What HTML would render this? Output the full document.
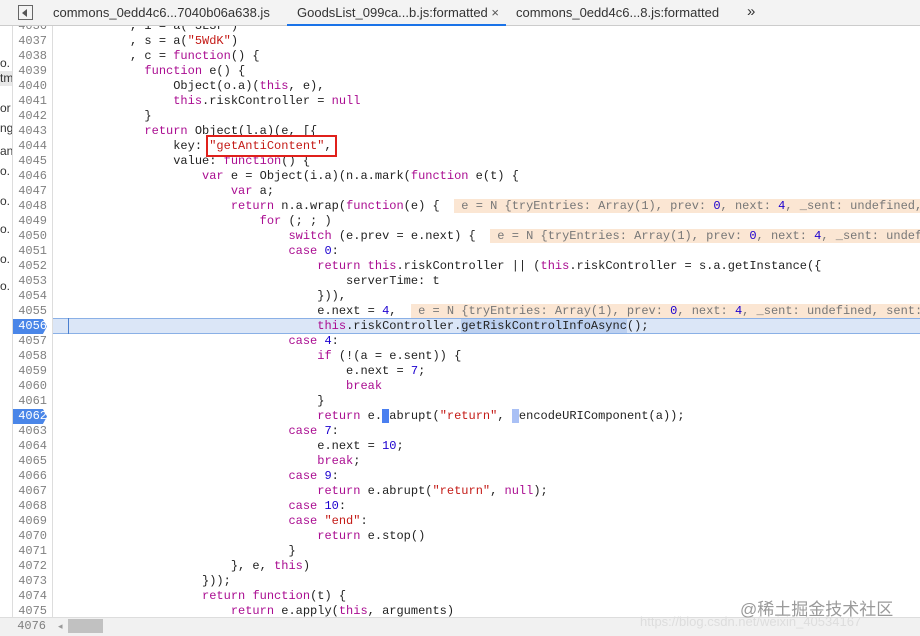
<!DOCTYPE html>
<html><head><meta charset="utf-8"><style>
*{margin:0;padding:0;box-sizing:border-box}
body{width:920px;height:636px;overflow:hidden;background:#fff;position:relative;font-family:"Liberation Mono",monospace}
.tabs{position:absolute;left:0;top:0;width:920px;height:26px;background:#f3f3f3;border-bottom:1px solid #ccc;font-family:"Liberation Sans",sans-serif;font-size:13px;color:#333;z-index:5}
.tabs span{position:absolute;top:5px;white-space:nowrap}
.side{position:absolute;left:0;top:26px;width:12px;height:610px;background:#fff;font-family:"Liberation Sans",sans-serif;font-size:12px;color:#333;overflow:hidden}
.side div{position:absolute;left:0;height:15px;white-space:nowrap}
.gut{position:absolute;left:12px;top:26px;width:41px;height:591px;background:#fff;border-left:1px solid #ddd;border-right:1px solid #ddd;overflow:hidden}
.gut div{position:absolute;left:0;width:34px;text-align:right;font-size:12px;color:#808080;height:15px;line-height:15px}
.gut .w{color:#fff}
.cv{position:absolute;left:53px;top:26px;width:867px;height:591px;overflow:hidden}
.cv pre{position:absolute;left:5px;top:-7.5px;font-family:"Liberation Mono",monospace;font-size:12px;line-height:15px;color:#222;white-space:pre}
.k{color:#aa0d91}.s{color:#c41a16}.n{color:#1c00cf}
.iv{background:#fbe6d3;color:#777}
.bp{position:absolute;left:1px;width:38px;height:14px;background:#4a86e8;clip-path:polygon(0 0,88% 0,100% 50%,88% 100%,0 100%)}
</style></head><body>
<div class="tabs">
<span style="left:18px;top:5px;width:15px;height:15px;border:1px solid #666;"></span>
<span style="left:22px;top:9px;width:0;height:0;border-top:4px solid transparent;border-bottom:4px solid transparent;border-right:5px solid #555"></span>
<span style="left:53px">commons_0edd4c6...7040b06a638.js</span>
<span style="left:297px">GoodsList_099ca...b.js:formatted <span style="position:static;color:#555">×</span></span>
<div style="position:absolute;left:287px;top:24px;width:219px;height:2px;background:#1a73e8"></div>
<span style="left:516px">commons_0edd4c6...8.js:formatted</span>
<span style="left:747px;font-size:15px;top:3px">»</span>
</div>
<div class="side">
<div style="top:30px">o.</div><div style="top:45px;background:#e8e8e8;width:12px">tm</div><div style="top:75px">or</div><div style="top:95px">ng</div><div style="top:118px">an</div><div style="top:138px">o.</div><div style="top:168px">o.</div><div style="top:196px">o.</div><div style="top:226px">o.</div><div style="top:253px">o.</div>
</div>
<div class="cv">
<div style="position:absolute;left:0;top:292px;width:867px;height:16px;background:#dbe6f7;border-top:1px solid #8ab0e6;border-bottom:1px solid #8ab0e6"></div>
<div style="position:absolute;left:15px;top:292px;width:1px;height:16px;background:#4a7fd0"></div>
<pre>          , i = a("3L3r")
          , s = a(<span class="s">"5WdK"</span>)
          , c = <span class="k">function</span>() {
            <span class="k">function</span> e() {
                Object(o.a)(<span class="k">this</span>, e),
                <span class="k">this</span>.riskController = <span class="k">null</span>
            }
            <span class="k">return</span> Object(l.a)(e, [{
                key: <span class="s">"getAntiContent"</span>,
                value: <span class="k">function</span>() {
                    <span class="k">var</span> e = Object(i.a)(n.a.mark(<span class="k">function</span> e(t) {
                        <span class="k">var</span> a;
                        <span class="k">return</span> n.a.wrap(<span class="k">function</span>(e) {  <span class="iv"> e = N {tryEntries: Array(1), prev: <span class="n">0</span>, next: <span class="n">4</span>, _sent: undefined, sent: undefined} </span>
                            <span class="k">for</span> (; ; )
                                <span class="k">switch</span> (e.prev = e.next) {  <span class="iv"> e = N {tryEntries: Array(1), prev: <span class="n">0</span>, next: <span class="n">4</span>, _sent: undefined, sent: undefined} </span>
                                <span class="k">case</span> <span class="n">0</span>:
                                    <span class="k">return</span> <span class="k">this</span>.riskController || (<span class="k">this</span>.riskController = s.a.getInstance({
                                        serverTime: t
                                    })),
                                    e.next = <span class="n">4</span>,  <span class="iv"> e = N {tryEntries: Array(1), prev: <span class="n">0</span>, next: <span class="n">4</span>, _sent: undefined, sent: undefined} </span>
                                    <span class="k">this</span>.riskController.<span style="background:#bcd0f0">getRiskControlInfoAsync</span>();
                                <span class="k">case</span> <span class="n">4</span>:
                                    <span class="k">if</span> (!(a = e.sent)) {
                                        e.next = <span class="n">7</span>;
                                        <span class="k">break</span>
                                    }
                                    <span class="k">return</span> e.<span style="background:#4a7ff0;color:#4a7ff0"> </span>abrupt(<span class="s">"return"</span>, <span style="background:#a9c0f5;color:#a9c0f5"> </span>encodeURIComponent(a));
                                <span class="k">case</span> <span class="n">7</span>:
                                    e.next = <span class="n">10</span>;
                                    <span class="k">break</span>;
                                <span class="k">case</span> <span class="n">9</span>:
                                    <span class="k">return</span> e.abrupt(<span class="s">"return"</span>, <span class="k">null</span>);
                                <span class="k">case</span> <span class="n">10</span>:
                                <span class="k">case</span> <span class="s">"end"</span>:
                                    <span class="k">return</span> e.stop()
                                }
                        }, e, <span class="k">this</span>)
                    }));
                    <span class="k">return</span> <span class="k">function</span>(t) {
                        <span class="k">return</span> e.apply(<span class="k">this</span>, arguments)
</pre>
<div style="position:absolute;left:153px;top:109px;width:131px;height:22px;border:2px solid #e0201b"></div>
</div>
<div class="gut">
<div class="bp" style="top:293px"></div>
<div class="bp" style="top:383px"></div>
<div style="top:-7.5px">4036</div><div style="top:7.5px">4037</div><div style="top:22.5px">4038</div><div style="top:37.5px">4039</div><div style="top:52.5px">4040</div><div style="top:67.5px">4041</div><div style="top:82.5px">4042</div><div style="top:97.5px">4043</div><div style="top:112.5px">4044</div><div style="top:127.5px">4045</div><div style="top:142.5px">4046</div><div style="top:157.5px">4047</div><div style="top:172.5px">4048</div><div style="top:187.5px">4049</div><div style="top:202.5px">4050</div><div style="top:217.5px">4051</div><div style="top:232.5px">4052</div><div style="top:247.5px">4053</div><div style="top:262.5px">4054</div><div style="top:277.5px">4055</div><div class="w" style="top:292.5px">4056</div><div style="top:307.5px">4057</div><div style="top:322.5px">4058</div><div style="top:337.5px">4059</div><div style="top:352.5px">4060</div><div style="top:367.5px">4061</div><div class="w" style="top:382.5px">4062</div><div style="top:397.5px">4063</div><div style="top:412.5px">4064</div><div style="top:427.5px">4065</div><div style="top:442.5px">4066</div><div style="top:457.5px">4067</div><div style="top:472.5px">4068</div><div style="top:487.5px">4069</div><div style="top:502.5px">4070</div><div style="top:517.5px">4071</div><div style="top:532.5px">4072</div><div style="top:547.5px">4073</div><div style="top:562.5px">4074</div><div style="top:577.5px">4075</div>
</div>
<div style="position:absolute;left:0;top:617px;width:920px;height:19px;background:#f1f1f1;border-top:1px solid #ddd"></div>
<div style="position:absolute;left:58px;top:621px;color:#999;font-size:9px;font-family:'Liberation Sans',sans-serif">◂</div>
<div style="position:absolute;left:68px;top:619px;width:35px;height:14px;background:#c1c1c1"></div>
<div style="position:absolute;left:12px;top:619px;width:34px;text-align:right;font-size:12px;color:#808080">4076</div>
<div style="position:absolute;left:740px;top:595px;font-family:'Liberation Sans','Noto Sans CJK SC',sans-serif;font-size:17px;color:#9a9a9a">@稀土掘金技术社区</div>
<div style="position:absolute;left:640px;top:614px;font-family:'Liberation Sans',sans-serif;font-size:13px;color:#ddd">https://blog.csdn.net/weixin_40534167</div>
</body></html>
